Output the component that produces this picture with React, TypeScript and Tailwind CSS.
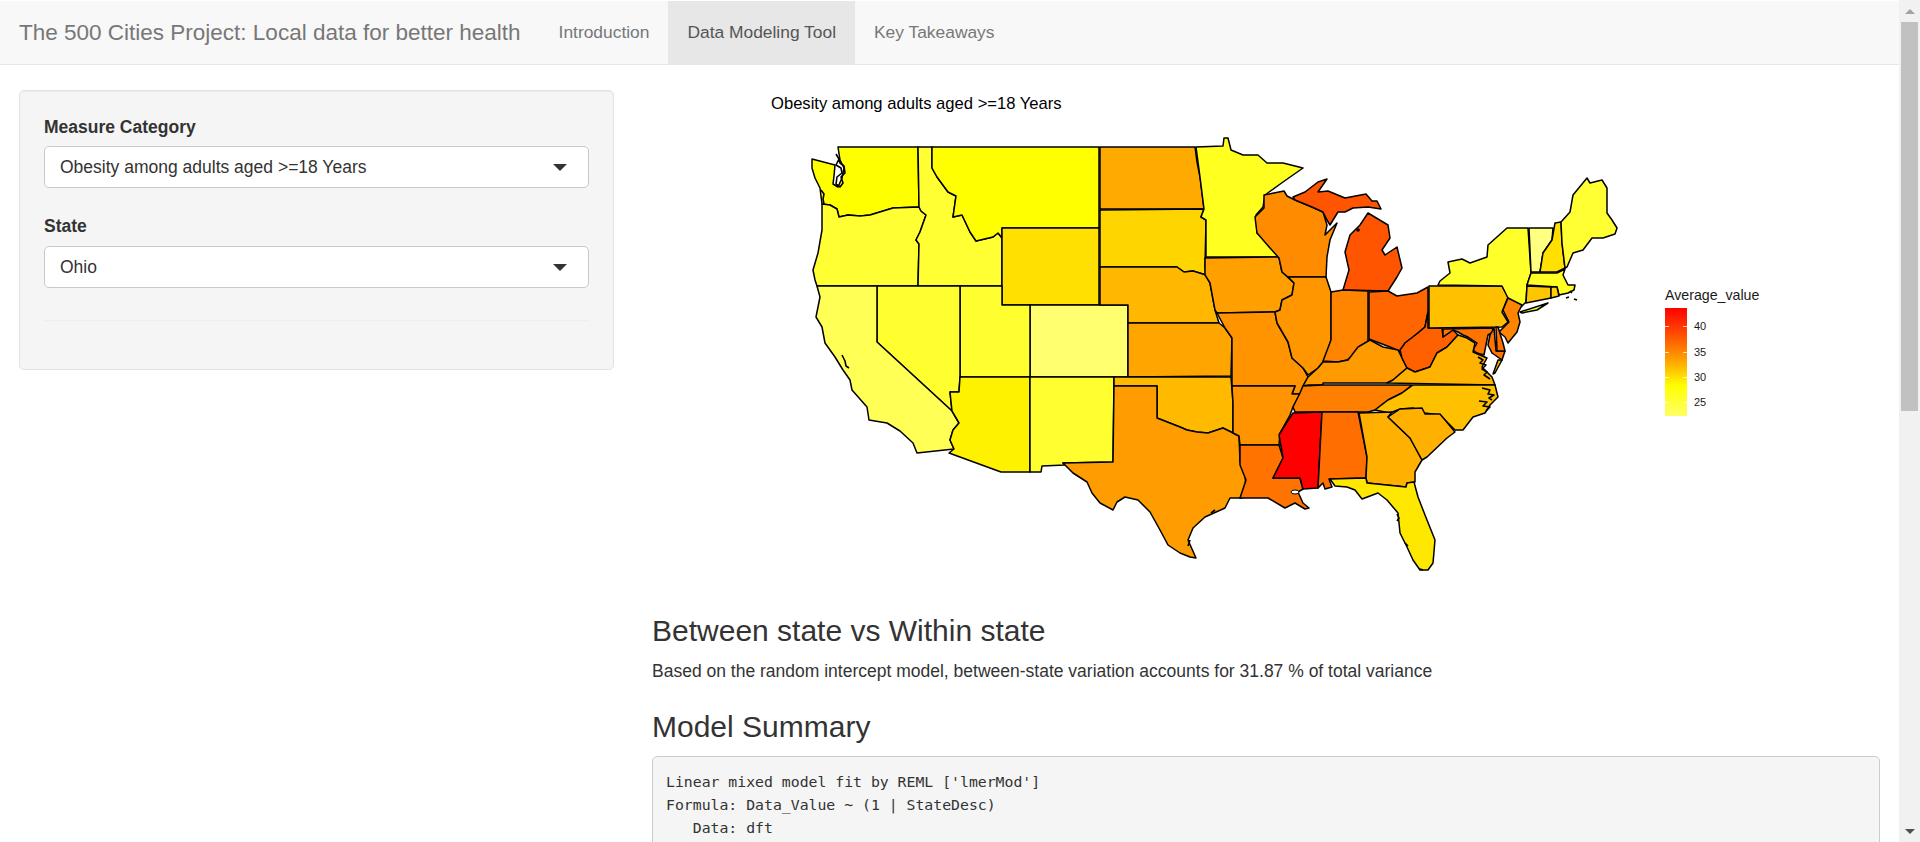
const sans = "font-['Liberation_Sans',Arial,sans-serif]";

const tabs = [
  { label: "Introduction", active: false },
  { label: "Data Modeling Tool", active: true },
  { label: "Key Takeaways", active: false },
];

// traced in page pixels, the svg's viewBox lines up with the page
const states = [
  { id: "WA", fill: "#ffff00", pts: "838,147 918,147 919,207 893,208 870,215 860,216 848,215 839,217 837,209 830,205 822,204 820,188 815,178 812,168 812,159 835,165 834,176 833,184 838,187 842,178 844,168 840,160" },
  { id: "OR", fill: "#ffff33", pts: "822,204 830,205 837,209 839,217 848,215 860,216 870,215 893,208 919,207 921,211 926,215 920,232 916,240 919,244 918,286 817,286 815,280 813,270 818,253 822,230" },
  { id: "ID", fill: "#ffff33", pts: "918,147 932,147 932,168 937,177 948,192 956,196 953,217 962,215 970,232 976,241 993,237 998,233 1002,238 1002,286 918,286 919,244 916,240 920,232 926,215 921,211 919,207" },
  { id: "MT", fill: "#ffff00", pts: "932,147 1099,147 1099,228 1002,228 1002,238 998,233 993,237 976,241 970,232 962,215 953,217 956,196 948,192 937,177 932,168" },
  { id: "WY", fill: "#ffe000", pts: "1002,228 1099,228 1099,305 1002,305" },
  { id: "CO", fill: "#ffff70", pts: "1030,305 1128,305 1128,377 1030,377" },
  { id: "UT", fill: "#ffff30", pts: "960,286 1002,286 1002,305 1030,305 1030,377 960,377" },
  { id: "NV", fill: "#ffff30", pts: "877,286 960,286 960,377 959,392 950,392 952,411 877,342" },
  { id: "CA", fill: "#ffff55", pts: "817,286 877,286 877,342 952,411 959,423 953,430 950,440 954,449 917,453 913,443 900,431 887,423 869,420 867,407 852,390 850,380 843,370 835,357 825,343 822,327 816,317 820,297" },
  { id: "AZ", fill: "#fff200", pts: "960,377 1030,377 1030,472 1001,472 949,453 954,449 950,440 953,430 959,423 952,411 950,392 959,392" },
  { id: "NM", fill: "#ffff30", pts: "1030,377 1114,377 1113,462 1063,463 1065,465 1042,466 1041,472 1030,472" },
  { id: "ND", fill: "#ffaa00", pts: "1100,147 1195,147 1197,162 1200,177 1204,209 1100,209" },
  { id: "SD", fill: "#ffd500", pts: "1100,210 1204,209 1201,217 1206,220 1205,267 1206,275 1193,271 1184,272 1177,267 1100,267" },
  { id: "NE", fill: "#ffb700", pts: "1100,267 1177,267 1184,272 1193,271 1206,275 1210,283 1215,310 1219,323 1128,323 1128,305 1100,305" },
  { id: "KS", fill: "#ffa500", pts: "1128,323 1219,323 1225,328 1232,338 1231,376 1128,377" },
  { id: "OK", fill: "#ffba00", pts: "1114,377 1231,377 1233,403 1233,433 1223,428 1208,433 1197,432 1187,430 1180,427 1157,418 1157,386 1114,386" },
  { id: "TX", fill: "#ff9d00", pts: "1114,386 1157,386 1157,418 1180,427 1187,430 1197,432 1208,433 1223,428 1233,433 1239,436 1240,462 1245,473 1246,490 1242,498 1230,498 1225,508 1205,517 1193,528 1188,540 1196,558 1190,557 1180,553 1168,545 1160,530 1150,512 1138,500 1125,497 1117,502 1113,510 1100,503 1092,493 1087,482 1073,473 1063,463 1113,462" },
  { id: "MN", fill: "#ffff20", pts: "1196,147 1223,146 1224,138 1228,138 1231,150 1243,155 1258,155 1267,163 1283,163 1303,168 1283,182 1265,195 1263,207 1256,215 1257,233 1278,252 1279,257 1206,257 1206,220 1201,217 1204,209 1200,177" },
  { id: "IA", fill: "#ff9f00", pts: "1205,258 1279,257 1282,272 1294,283 1292,295 1282,300 1280,310 1275,312 1217,313 1215,310 1210,283 1205,275" },
  { id: "MO", fill: "#ff9400", pts: "1217,313 1275,312 1277,323 1288,342 1292,358 1303,368 1308,377 1303,386 1300,394 1292,394 1295,386 1232,386 1232,338 1225,328" },
  { id: "AR", fill: "#ff9400", pts: "1232,386 1295,386 1292,394 1300,394 1293,407 1290,415 1280,433 1279,445 1240,445 1239,436 1233,433 1233,403" },
  { id: "LA", fill: "#ff7300", pts: "1240,445 1279,445 1283,458 1273,478 1300,478 1303,489 1298,492 1303,503 1309,508 1305,509 1295,503 1285,508 1268,498 1252,498 1240,498 1246,480 1240,465" },
  { id: "WI", fill: "#ff8c00", pts: "1264,195 1284,191 1287,196 1295,200 1312,207 1323,212 1327,225 1325,235 1337,223 1330,240 1327,257 1326,277 1288,277 1282,272 1279,258 1270,248 1257,233 1255,217 1264,208" },
  { id: "UP", fill: "#ff5500", pts: "1293,197 1305,192 1318,182 1327,179 1318,192 1328,191 1345,198 1366,194 1372,201 1377,201 1381,209 1368,207 1353,208 1345,212 1338,212 1330,225 1327,220 1323,212 1312,207 1295,200" },
  { id: "MI", fill: "#ff5500", pts: "1368,213 1388,225 1390,238 1382,250 1385,255 1397,247 1402,268 1397,277 1388,291 1343,290 1349,270 1345,252 1350,235 1360,225" },
  { id: "IL", fill: "#ff9600", pts: "1288,277 1326,277 1331,292 1331,340 1325,360 1323,362 1318,368 1308,375 1303,368 1292,358 1288,342 1277,323 1275,312 1280,310 1282,300 1292,295 1294,283" },
  { id: "IN", fill: "#ff8400", pts: "1331,292 1343,290 1368,291 1368,345 1355,355 1347,360 1338,362 1323,361 1331,340" },
  { id: "OH", fill: "#ff6600", pts: "1369,292 1388,291 1397,296 1417,293 1428,287 1428,312 1425,327 1413,337 1405,343 1402,352 1390,347 1377,342 1369,339" },
  { id: "KY", fill: "#ff9a00", pts: "1323,362 1338,362 1348,360 1358,347 1370,340 1383,347 1398,350 1402,358 1407,368 1393,380 1387,383 1323,383 1323,385 1308,385 1303,386 1308,377 1318,368" },
  { id: "WV", fill: "#ff6000", pts: "1428,312 1428,328 1442,328 1443,337 1453,330 1458,335 1447,347 1437,353 1430,367 1415,372 1407,368 1402,358 1400,350 1405,343 1418,333 1425,327" },
  { id: "PA", fill: "#ffc000", pts: "1429,286 1502,286 1508,297 1502,312 1508,322 1502,327 1429,328" },
  { id: "NY", fill: "#ffff2a", pts: "1438,285 1440,281 1450,273 1448,262 1462,259 1470,263 1487,257 1488,245 1507,228 1528,228 1531,273 1527,285 1526,302 1520,308 1508,298 1502,286" },
  { id: "LI", fill: "#ffff2a", pts: "1520,312 1548,303 1537,310 1522,313" },
  { id: "VT", fill: "#ffff80", pts: "1529,228 1553,228 1552,240 1543,253 1540,272 1531,272" },
  { id: "NH", fill: "#ffe000", pts: "1555,223 1561,222 1562,243 1565,268 1557,272 1540,272 1543,253 1552,240" },
  { id: "ME", fill: "#ffff33", pts: "1561,222 1570,212 1573,195 1587,178 1590,183 1602,180 1607,188 1607,213 1612,220 1617,228 1615,234 1603,238 1592,238 1583,250 1573,253 1567,267 1565,268 1562,243" },
  { id: "MA", fill: "#ffff25", pts: "1531,273 1557,273 1565,269 1563,275 1568,285 1575,285 1574,290 1568,293 1559,295 1557,287 1527,285" },
  { id: "CT", fill: "#ffc500", pts: "1527,286 1551,287 1551,298 1526,303" },
  { id: "RI", fill: "#ffd000", pts: "1551,287 1557,287 1559,296 1551,298" },
  { id: "NJ", fill: "#ff8500", pts: "1508,298 1522,305 1518,313 1520,322 1517,332 1508,343 1505,337 1499,332 1509,322 1503,310" },
  { id: "MD", fill: "#ff7300", pts: "1443,329 1493,328 1493,332 1488,335 1484,355 1477,353 1473,350 1477,343 1468,337 1463,335 1458,332 1453,330 1443,337" },
  { id: "ES", fill: "#ff7300", pts: "1494,328 1496,351 1505,351 1502,360 1492,353 1488,345 1490,335" },
  { id: "DE", fill: "#ff7000", pts: "1496,327 1498,327 1503,343 1505,351 1497,351" },
  { id: "VA", fill: "#ffb300", pts: "1458,335 1467,338 1475,343 1473,352 1487,358 1482,367 1492,377 1495,385 1387,383 1393,380 1407,368 1415,372 1430,367 1437,353 1447,347" },
  { id: "VE", fill: "#ffb300", pts: "1498,360 1502,360 1495,373 1493,374" },
  { id: "TN", fill: "#ff8000", pts: "1323,385 1412,385 1402,393 1388,400 1375,410 1368,412 1295,412 1293,407 1300,393 1303,386" },
  { id: "NC", fill: "#ffc000", pts: "1413,385 1495,385 1498,397 1490,405 1485,413 1473,417 1463,430 1455,430 1440,415 1425,413 1413,408 1400,409 1390,413 1375,410 1388,400 1402,393" },
  { id: "MS", fill: "#ff0000", pts: "1293,413 1322,412 1318,488 1303,489 1300,478 1273,478 1283,458 1279,435 1287,422" },
  { id: "AL", fill: "#ff6e00", pts: "1322,412 1358,412 1367,457 1366,478 1329,479 1332,487 1325,489 1323,483 1318,488" },
  { id: "GA", fill: "#ffb000", pts: "1359,413 1392,412 1388,417 1410,438 1422,460 1415,472 1415,482 1407,483 1406,487 1367,483 1366,478 1367,457" },
  { id: "SC", fill: "#ffb000", pts: "1388,417 1400,409 1422,408 1425,414 1440,414 1455,432 1447,438 1427,457 1422,460 1410,438" },
  { id: "FL", fill: "#ffe800", pts: "1330,479 1366,478 1367,483 1406,487 1407,483 1414,482 1418,497 1425,515 1435,540 1433,563 1428,570 1420,570 1413,560 1407,547 1400,533 1398,513 1387,500 1378,493 1362,499 1355,490 1347,487 1335,486" },
];

// coastline scribbles: Puget Sound, SF bay, Chesapeake inlets, Pamlico, islands
const coast = [
  "M836 154l3 5-3 6 5 3 1 5-5 4-1 7 4 3 3-4-2-6 4-4-1-7-4-3-1-6",
  "M821 190l3 4-1 5 1 5",
  "M842 355l3 6 1 5 3 2",
  "M1478 357l5 3-3 3 6 2-4 4 5 3-3 3 6 4",
  "M1482 388l8 2-2 4 6 1-5 3 3 2M1479 401l8 1-4 4 7 1-4 4",
  "M1566 298l3-1M1574 299l3 1M1570 291l2 2",
  "M1397 514l2 4-2 3M1405 543l3 3M1420 569l3 1",
  "M1190 540l-2 6M1215 510l-4 3",
];

function Scrollbar() {
  return (
    <div className="flex h-[842px] w-[21px] shrink-0 flex-col items-center bg-[#f1f1f1]">
      <div className="flex h-[22px] items-center justify-center">
        <div className="border-x-[5px] border-b-[5px] border-x-transparent border-b-[#a3a3a3]" />
      </div>
      <div className="h-[389px] w-[17px] bg-[#c1c1c1]" />
      <div className="flex-1" />
      <div className="flex h-[22px] items-center justify-center">
        <div className="border-x-[5px] border-t-[5px] border-x-transparent border-t-[#505050]" />
      </div>
    </div>
  );
}

function SelectBox({ value }: { value: string }) {
  return (
    <div className="flex h-[42px] items-center justify-between rounded-[5px] border border-[#c9c9c9] bg-white pl-[15px] pr-[21px] text-[17.5px] text-[#333]">
      <span>{value}</span>
      <div className="border-x-[7px] border-t-[7px] border-x-transparent border-t-[#333]" />
    </div>
  );
}

function Legend() {
  const ticks = [
    { label: "40", cls: "top-[18px]" },
    { label: "35", cls: "top-[44px]" },
    { label: "30", cls: "top-[69px]" },
    { label: "25", cls: "top-[94px]" },
  ];
  return (
    <div className="ml-[35px] mt-[194px] text-[#1a1a1a]">
      <div className="text-[14.2px] leading-[16px]">Average_value</div>
      <div className="relative mt-[5px] h-[108px] w-[22px] bg-[linear-gradient(to_bottom,#ff0000_0%,#ff6000_30%,#ffb000_52%,#ffff00_72%,#ffff66_100%)]">
        {ticks.map((t) => (
          <div key={t.label} className={`absolute left-0 flex h-px w-[52px] items-center ${t.cls}`}>
            <div className="h-px w-[4px] bg-white/70" />
            <div className="w-[14px]" />
            <div className="h-px w-[4px] bg-white/70" />
            <span className="ml-[7px] text-[11px] leading-none">{t.label}</span>
          </div>
        ))}
      </div>
    </div>
  );
}

function UsMap() {
  return (
    <svg viewBox="800 130 830 450" width="830" height="450" className="ml-[29px] mt-[15px] block">
      {states.map((s) => (
        <polygon key={s.id} points={s.pts} fill={s.fill} stroke="#000" strokeWidth="1.5" strokeLinejoin="round" />
      ))}
      {coast.map((d) => (
        <path key={d} d={d} fill="none" stroke="#000" strokeWidth="1.6" strokeLinejoin="round" />
      ))}
      <circle cx="1358" cy="230" r="1.8" fill="#000" />
      <ellipse cx="1295" cy="492" rx="4" ry="2" fill="#fff" stroke="#000" />
    </svg>
  );
}

export default function App() {
  return (
    <div className={`flex h-[842px] overflow-hidden bg-white ${sans}`}>
      <div className="min-w-0 flex-1 pt-px">
        <nav className="flex h-[64px] border-b border-[#e7e7e7] bg-[#f8f8f8]">
          <div className="ml-[19px] mr-[19px] flex items-center text-[22.5px] text-[#777]">
            The 500 Cities Project: Local data for better health
          </div>
          {tabs.map((t) => (
            <div
              key={t.label}
              className={`flex items-center px-[19px] text-[17.4px] ${t.active ? "bg-[#e7e7e7] text-[#555]" : "text-[#777]"}`}
            >
              {t.label}
            </div>
          ))}
        </nav>

        <div className="flex">
          <aside className="w-[633px] shrink-0 px-[19px] pt-[25px]">
            <div className="h-[280px] rounded-[5px] border border-[#e3e3e3] bg-[#f5f5f5] px-[24px] pt-[24px] shadow-[inset_0_1px_1px_rgba(0,0,0,0.05)]">
              <label className="mb-[7px] block text-[17.5px] font-bold leading-[24px] text-[#333]">Measure Category</label>
              <SelectBox value="Obesity among adults aged >=18 Years" />
              <label className="mb-[8px] mt-[26px] block text-[17.5px] font-bold leading-[24px] text-[#333]">State</label>
              <SelectBox value="Ohio" />
              <hr className="mt-[32px] border-t border-[#eeeeee]" />
            </div>
          </aside>

          <main className="min-w-0 flex-1 pl-[19px] pr-[19px]">
            <div className="flex pl-[119px] pt-[28px]">
              <div>
                <div className="text-[16.6px] leading-[22px] text-black">Obesity among adults aged &gt;=18 Years</div>
                <UsMap />
              </div>
              <Legend />
            </div>
            <h3 className="mt-[34px] text-[30px] leading-[33px] text-[#333]">Between state vs Within state</h3>
            <p className="mt-[12px] text-[17.5px] leading-[24px] text-[#333]">
              Based on the random intercept model, between-state variation accounts for 31.87 % of total variance
            </p>
            <h3 className="mt-[27px] text-[30px] leading-[33px] text-[#333]">Model Summary</h3>
            <pre className="mt-[13px] rounded-[5px] border border-[#cccccc] bg-[#f5f5f5] px-[13px] pb-[60px] pt-[13px] font-['DejaVu_Sans_Mono',monospace] text-[14.8px] leading-[23.2px] text-[#333]">
              {"Linear mixed model fit by REML ['lmerMod']\nFormula: Data_Value ~ (1 | StateDesc)\n   Data: dft"}
            </pre>
          </main>
        </div>
      </div>
      <Scrollbar />
    </div>
  );
}
